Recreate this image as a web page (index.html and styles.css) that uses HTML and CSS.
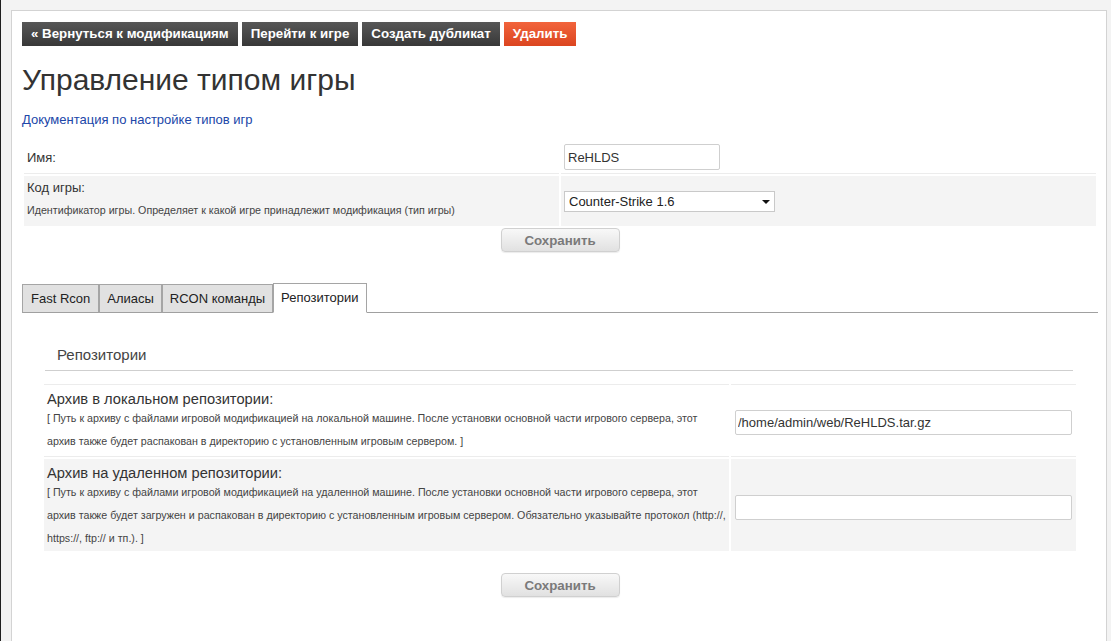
FILE: index.html
```html
<!DOCTYPE html>
<html lang="ru">
<head>
  <meta charset="UTF-8">
  <title>Управление типом игры</title>
  <meta name="viewport" content="width=device-width, initial-scale=1">
  <link rel="stylesheet" href="styles.css">
</head>
<body>

  <div class="page">
    <div class="actions">
      <a class="btn" href="#">« Вернуться к модификациям</a>
      <a class="btn" href="#">Перейти к игре</a>
      <a class="btn" href="#">Создать дубликат</a>
      <a class="btn btn-danger" href="#">Удалить</a>
    </div>

    <h1>Управление типом игры</h1>
    <a class="doc-link" href="#">Документация по настройке типов игр</a>

    <form>
      <table class="form-table main-table">
        <tr class="row-line">
          <td class="label">Имя:</td>
          <td class="value"><input class="input-name" type="text" value="ReHLDS"></td>
        </tr>
        <tr class="row-alt">
          <td class="label">
            <div class="field-title">Код игры:</div>
            <div class="field-hint">Идентификатор игры. Определяет к какой игре принадлежит модификация (тип игры)</div>
          </td>
          <td class="value">
            <span class="select-wrap">
              <select class="select-game">
                <option>Counter-Strike 1.6</option>
              </select>
            </span>
          </td>
        </tr>
      </table>
      <div class="submit-row"><button type="button" class="btn-save">Сохранить</button></div>
    </form>

    <ul class="tabs">
      <li class="tab">Fast Rcon</li>
      <li class="tab">Алиасы</li>
      <li class="tab">RCON команды</li>
      <li class="tab active">Репозитории</li>
    </ul>

    <div class="tab-pane">
      <div class="legend">Репозитории</div>
      <form>
        <table class="form-table repo-table">
          <tr class="row-line">
            <td class="label">
              <div class="repo-title">Архив в локальном репозитории:</div>
              <div class="repo-hint">[ Путь к архиву с файлами игровой модификацией на локальной машине. После установки основной части игрового сервера, этот<br>архив также будет распакован в директорию с установленным игровым сервером. ]</div>
            </td>
            <td class="value"><input class="input-repo" type="text" value="/home/admin/web/ReHLDS.tar.gz"></td>
          </tr>
          <tr class="row-alt">
            <td class="label">
              <div class="repo-title">Архив на удаленном репозитории:</div>
              <div class="repo-hint">[ Путь к архиву с файлами игровой модификацией на удаленной машине. После установки основной части игрового сервера, этот<br>архив также будет загружен и распакован в директорию с установленным игровым сервером. Обязательно указывайте протокол (http://,<br>https://, ftp:// и тп.). ]</div>
            </td>
            <td class="value"><input class="input-repo" type="text" value=""></td>
          </tr>
        </table>
        <div class="submit-row repo-submit"><button type="button" class="btn-save">Сохранить</button></div>
      </form>
    </div>
  </div>

</body>
</html>
```

FILE: styles.css
```css
* {
  box-sizing: border-box;
}

html, body {
  height: 100%;
}

body {
  margin: 0;
  padding: 10px 4px 0 10px;
  background: #f3f3f3;
  border-left: 1px solid #1f1f1f;
  font-family: "Liberation Sans", Arial, sans-serif;
  font-size: 13px;
  color: #333;
}

.page {
  background: #fff;
  border: 1px solid #d3d3d3;
  border-bottom: none;
  min-height: 100%;
  padding: 11px 8px 40px 10px;
}

/* top buttons */
.actions {
  display: flex;
  gap: 4px;
}

.btn {
  display: block;
  height: 24px;
  line-height: 24px;
  padding: 0 9px;
  color: #fff;
  font-size: 13.3px;
  font-weight: bold;
  text-decoration: none;
  background: linear-gradient(#575757, #383838);
}

.btn-danger {
  background: linear-gradient(#f2643c, #db4520);
}

h1 {
  margin: 16px 0 13px;
  font-size: 30px;
  font-weight: normal;
  line-height: 36px;
  color: #333;
}

.doc-link {
  display: block;
  width: fit-content;
  line-height: 18px;
  color: #2046a8;
  text-decoration: none;
}

/* form tables */
.form-table {
  width: 100%;
  border-collapse: separate;
  border-spacing: 2px;
}

.form-table td {
  vertical-align: middle;
}

.main-table {
  margin-top: 10px;
}

.main-table td {
  padding: 3px 4px 3px 3px;
}

.main-table .label {
  width: 50%;
}

.row-line td {
  border-bottom: 1px solid #ececec;
}

.row-alt td {
  background: #f4f4f4;
}

.field-title {
  line-height: 18px;
}

.field-hint {
  font-size: 10.7px;
  line-height: 26px;
  color: #444;
}

.input-name {
  width: 156px;
  height: 26px;
  padding: 0 3px;
  border: 1px solid #cfcfcf;
  border-radius: 2px;
  font-family: inherit;
  font-size: 13px;
  color: #333;
}

.select-wrap {
  position: relative;
  display: inline-block;
}

.select-wrap::after {
  content: "";
  position: absolute;
  right: 5px;
  top: 9px;
  border-left: 4px solid transparent;
  border-right: 4px solid transparent;
  border-top: 4px solid #111;
  pointer-events: none;
}

.select-game {
  display: block;
  width: 211px;
  height: 21px;
  padding: 0 4px;
  border: 1px solid #c9c9c9;
  border-radius: 0;
  background: #fff;
  appearance: none;
  font-family: inherit;
  font-size: 13px;
  color: #222;
}

.submit-row {
  text-align: center;
}

.btn-save {
  width: 119px;
  height: 24px;
  border: 1px solid #d0d0d0;
  border-radius: 4px;
  background: linear-gradient(#f8f8f8, #e1e1e1);
  box-shadow: 0 1px 1px rgba(0, 0, 0, 0.08);
  font-family: inherit;
  font-size: 13.3px;
  font-weight: bold;
  color: #7a7a7a;
  cursor: pointer;
}

/* tabs */
.tabs {
  display: flex;
  margin: 32px 0 0;
  padding: 0;
  list-style: none;
  border-bottom: 1px solid #a0a0a0;
}

.tab {
  height: 29px;
  margin-bottom: -1px;
  padding: 0 7px;
  line-height: 28px;
  border: 1px solid #a5a5a5;
  border-bottom: 1px solid #a0a0a0;
  background: #e1e1e1;
  color: #222;
}

.tab:first-child {
  padding: 0 8px;
}

.tab.active {
  height: 30px;
  margin-top: -1px;
  background: #fff;
  border-bottom-color: #fff;
}

.tab-pane {
  padding: 33px 20px 0;
}

.legend {
  margin: 0 5px 0 3px;
  padding: 0 12px 6px;
  font-size: 15px;
  line-height: 18px;
  color: #444;
  border-bottom: 1px solid #cfcfcf;
}

.repo-table {
  margin-top: 11px;
}

.repo-table td {
  padding: 5px 4px 1px;
}

.repo-table .label {
  width: 685px;
  padding: 6px 0 3px 3px;
}

.repo-table .row-alt .label {
  padding-bottom: 1px;
}

.repo-table .row-line td {
  border-top: 1px solid #ececec;
}

.repo-title {
  font-size: 14.7px;
  line-height: 16px;
  color: #333;
}

.repo-hint {
  margin-right: -20px;
  font-size: 10.7px;
  line-height: 23px;
  color: #444;
}

.input-repo {
  display: block;
  width: 100%;
  height: 25px;
  padding: 0 2px;
  border: 1px solid #cfcfcf;
  border-radius: 2px;
  font-family: inherit;
  font-size: 13px;
  color: #333;
}

.repo-submit {
  margin-top: 20px;
}
```
